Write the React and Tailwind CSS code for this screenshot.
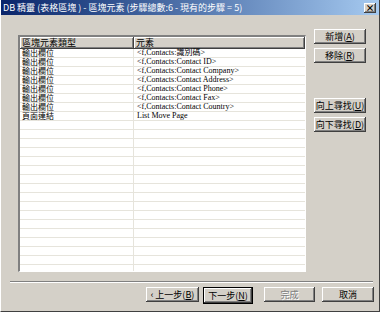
import React from 'react';

const raised =
  'bg-[#d4d0c8] shadow-[inset_-1px_-1px_#404040,inset_1px_1px_#ffffff,inset_-2px_-2px_#808080]';

const rows = [
  ['輸出欄位', '<f,Contacts:識別碼>'],
  ['輸出欄位', '<f,Contacts:Contact ID>'],
  ['輸出欄位', '<f,Contacts:Contact Company>'],
  ['輸出欄位', '<f,Contacts:Contact Address>'],
  ['輸出欄位', '<f,Contacts:Contact Phone>'],
  ['輸出欄位', '<f,Contacts:Contact Fax>'],
  ['輸出欄位', '<f,Contacts:Contact Country>'],
  ['頁面連結', 'List Move Page'],
];

function Btn({ label, hot, className = '', disabled = false }) {
  return (
    <button
      className={`${raised} h-[15px] flex items-center justify-center text-[9px] leading-none ${
        disabled ? 'text-[#808080] [text-shadow:1px_1px_#ffffff]' : 'text-black'
      } ${className}`}
    >
      {label}
      {hot && (
        <span>
          (<span className="underline">{hot}</span>)
        </span>
      )}
    </button>
  );
}

export default function App() {
  const filler = Array.from({ length: 26 - rows.length });

  return (
    <div
      className="w-[380px] h-[312px] bg-[#d4d0c8] border-l border-l-white border-r border-r-[#404040] border-b border-b-[#404040] flex flex-col overflow-hidden"
      style={{ fontFamily: '"Noto Sans CJK TC", "Liberation Sans", sans-serif' }}
    >
      {/* title bar */}
      <div className="h-[15px] flex items-center justify-between pl-[2px] pr-[3px] bg-gradient-to-r from-[#0a246a] to-[#a6caf0]">
        <span className="text-white text-[9px] leading-none whitespace-nowrap">
          DB 精靈 (表格區塊 ) - 區塊元素 (步驟總數:6 - 現有的步驟 = 5)
        </span>
        <div className={`${raised} w-[12px] h-[10px] flex items-center justify-center text-[9px] font-bold leading-none text-black`}>
          ×
        </div>
      </div>

      {/* content */}
      <div className="flex items-start pt-[14px] pl-[17px]">
        <div className="mt-[6px] w-[288px] h-[237px] border-t-2 border-l-2 border-t-[#808080] border-l-[#808080] border-b border-r border-b-white border-r-white bg-white overflow-hidden">
          <div className="flex h-[12px] text-[9px] leading-[11px] text-black">
            <div className={`${raised} w-[114px] pl-[2px]`}>區塊元素類型</div>
            <div className={`${raised} flex-1 pl-[2px]`}>元素</div>
          </div>
          {rows.map(([type, el], i) => (
            <div key={i} className="flex h-[9px] border-b border-b-[#e6e4dc] text-black">
              <div className="w-[114px] pl-[2px] border-r border-r-[#e6e4dc] text-[8px] leading-[8px] whitespace-nowrap">
                {type}
              </div>
              <div
                className="flex-1 pl-[3px] text-[8px] leading-[8px] whitespace-nowrap"
                style={{ fontFamily: '"Liberation Serif", "Noto Sans CJK TC", serif' }}
              >
                {el}
              </div>
            </div>
          ))}
          {filler.map((_, i) => (
            <div key={i} className="flex h-[9px] border-b border-b-[#e6e4dc]">
              <div className="w-[114px] border-r border-r-[#e6e4dc]" />
            </div>
          ))}
        </div>

        <div className="ml-[8px] w-[52px] flex flex-col">
          <Btn label="新增" hot="A" />
          <Btn label="移除" hot="R" className="mt-[4px]" />
          <Btn label="向上尋找" hot="U" className="mt-[35px]" />
          <Btn label="向下尋找" hot="D" className="mt-[4px]" />
        </div>
      </div>

      {/* separator */}
      <div className="mt-[9px] ml-[9px] mr-[6px] border-t border-t-[#808080] border-b border-b-white" />

      {/* wizard buttons */}
      <div className="mt-[4px] flex pl-[145px]">
        <Btn label="‹ 上一步" hot="B" className="w-[53px]" />
        <div className="ml-[4px] border border-black">
          <Btn label="下一步" hot="N" className="w-[48px] h-[14px]" />
        </div>
        <Btn label="完成" className="ml-[11px] w-[51px]" disabled />
        <Btn label="取消" className="ml-[7px] w-[52px]" />
      </div>
    </div>
  );
}
